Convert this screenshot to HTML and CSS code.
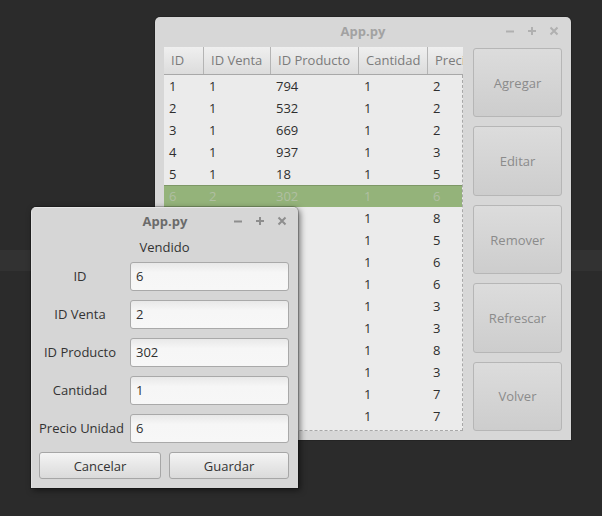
FILE: index.html
```html
<!DOCTYPE html>
<html lang="es">
<head>
<meta charset="utf-8">
<title>App.py</title>
<link rel="stylesheet" href="styles.css">
</head>
<body>
<div class="desktop">
  <div class="band"></div>

  <div class="window main-window">
    <div class="titlebar inactive">
      <span class="title">App.py</span>
      <div class="controls">
        <svg width="10" height="10" viewBox="0 0 10 10"><path d="M1 5.5h8" /></svg>
        <svg width="10" height="10" viewBox="0 0 10 10"><path d="M1 5h8M5 1v8" /></svg>
        <svg width="10" height="10" viewBox="0 0 10 10"><path d="M1.5 1.5l7 7M8.5 1.5l-7 7" /></svg>
      </div>
    </div>
    <div class="main-body">
      <div class="table">
        <div class="thead">
          <div class="th">ID</div>
          <div class="th">ID Venta</div>
          <div class="th">ID Producto</div>
          <div class="th">Cantidad</div>
          <div class="th">Precio Unidad</div>
        </div>
        <div class="tbody">
          <div class="tr"><span>1</span><span>1</span><span>794</span><span>1</span><span>2</span></div>
          <div class="tr"><span>2</span><span>1</span><span>532</span><span>1</span><span>2</span></div>
          <div class="tr"><span>3</span><span>1</span><span>669</span><span>1</span><span>2</span></div>
          <div class="tr"><span>4</span><span>1</span><span>937</span><span>1</span><span>3</span></div>
          <div class="tr"><span>5</span><span>1</span><span>18</span><span>1</span><span>5</span></div>
          <div class="tr selected"><span>6</span><span>2</span><span>302</span><span>1</span><span>6</span></div>
          <div class="tr"><span>7</span><span>2</span><span>415</span><span>1</span><span>8</span></div>
          <div class="tr"><span>8</span><span>2</span><span>87</span><span>1</span><span>5</span></div>
          <div class="tr"><span>9</span><span>3</span><span>221</span><span>1</span><span>6</span></div>
          <div class="tr"><span>10</span><span>3</span><span>640</span><span>1</span><span>6</span></div>
          <div class="tr"><span>11</span><span>3</span><span>58</span><span>1</span><span>3</span></div>
          <div class="tr"><span>12</span><span>4</span><span>733</span><span>1</span><span>3</span></div>
          <div class="tr"><span>13</span><span>4</span><span>196</span><span>1</span><span>8</span></div>
          <div class="tr"><span>14</span><span>4</span><span>512</span><span>1</span><span>3</span></div>
          <div class="tr"><span>15</span><span>5</span><span>880</span><span>1</span><span>7</span></div>
          <div class="tr"><span>16</span><span>5</span><span>27</span><span>1</span><span>7</span></div>
        </div>
      </div>
      <div class="side-buttons">
        <button class="big-btn">Agregar</button>
        <button class="big-btn">Editar</button>
        <button class="big-btn">Remover</button>
        <button class="big-btn">Refrescar</button>
        <button class="big-btn">Volver</button>
      </div>
    </div>
  </div>

  <div class="window dialog">
    <div class="titlebar active">
      <span class="title">App.py</span>
      <div class="controls">
        <svg width="10" height="10" viewBox="0 0 10 10"><path d="M1 5.5h8" /></svg>
        <svg width="10" height="10" viewBox="0 0 10 10"><path d="M1 5h8M5 1v8" /></svg>
        <svg width="10" height="10" viewBox="0 0 10 10"><path d="M1.5 1.5l7 7M8.5 1.5l-7 7" /></svg>
      </div>
    </div>
    <div class="dialog-body">
      <div class="heading">Vendido</div>
      <div class="form">
        <label class="lbl">ID</label><div class="input">6</div>
        <label class="lbl">ID Venta</label><div class="input">2</div>
        <label class="lbl">ID Producto</label><div class="input">302</div>
        <label class="lbl">Cantidad</label><div class="input">1</div>
        <label class="lbl">Precio Unidad</label><div class="input">6</div>
      </div>
      <div class="actions">
        <button class="btn">Cancelar</button>
        <button class="btn">Guardar</button>
      </div>
    </div>
  </div>
</div>
</body>
</html>
```

FILE: styles.css
```css
* { box-sizing: border-box; }
html, body { margin: 0; padding: 0; }
body {
  width: 602px;
  height: 516px;
  overflow: hidden;
  background: #2b2b2b;
  font-family: "Open Sans", "Noto Sans", "DejaVu Sans", sans-serif;
  font-size: 13px;
}
.desktop {
  position: relative;
  width: 602px;
  height: 516px;
  background: #2b2b2b;
}
.band {
  position: absolute;
  left: 0;
  top: 250px;
  width: 602px;
  height: 21px;
  background: #323232;
}

.window {
  position: absolute;
  background: #d6d6d6;
  border-radius: 5px 5px 0 0;
  display: flex;
  flex-direction: column;
}
.main-window {
  left: 155px;
  top: 17px;
  width: 416px;
  height: 423px;
  background: #d7d7d7;
  box-shadow: 0 0 0 1px rgba(0,0,0,0.15);
}
.dialog {
  left: 31px;
  top: 207px;
  width: 267px;
  height: 281px;
  background: #d6d6d6;
  border-top: 1px solid #e6e6e6;
  border-left: 1px solid #e2e2e2;
  box-shadow: 2px 2px 6px rgba(0,0,0,0.55), 0 0 0 1px rgba(0,0,0,0.2);
}

.titlebar {
  position: relative;
  height: 28px;
  flex: none;
  display: flex;
  align-items: center;
  justify-content: center;
}
.dialog .titlebar { height: 26px; }
.title {
  font-weight: 700;
  font-size: 13px;
  line-height: 16px;
}
.inactive .title { color: #a2a2a2; }
.active .title { color: #6b6b6b; }
.controls {
  position: absolute;
  right: 12px;
  top: 9px;
  display: flex;
  gap: 12px;
}
.dialog .controls { top: 8px; right: 11px; }
.controls svg path {
  fill: none;
  stroke-width: 2;
  stroke-linecap: butt;
}
.inactive .controls svg path { stroke: #b0b0b0; }
.active .controls svg path { stroke: #8e8e8e; }

.main-body {
  display: flex;
  gap: 10px;
  padding: 2px 9px 9px 9px;
  flex: 1;
}
.table {
  width: 299px;
  height: 384px;
  display: flex;
  flex-direction: column;
  overflow: hidden;
}
.thead {
  height: 28px;
  flex: none;
  display: grid;
  grid-template-columns: 40px 67px 88px 69px 90px;
  background: linear-gradient(#efefef, #dcdcdc);
  border-bottom: 1px solid #a8a8a8;
}
.th {
  padding-left: 7px;
  line-height: 27px;
  color: #7b7b7b;
  white-space: nowrap;
  overflow: hidden;
  border-right: 1px solid #b4b4b4;
}
.tbody {
  flex: 1;
  background: #ebebeb;
  border-right: 1px dashed #a8a8a8;
  border-bottom: 1px dashed #a8a8a8;
  overflow: hidden;
}
.tr {
  height: 22px;
  display: grid;
  grid-template-columns: 40px 67px 88px 69px 90px;
  line-height: 22px;
  color: #2e2e2e;
}
.tr span { padding-left: 5px; white-space: nowrap; }
.tr.selected {
  background: #94b37a;
  color: #b0bfa2;
  box-shadow: inset 0 1px 0 #7d9766;
}

.side-buttons {
  width: 89px;
  height: 384px;
  display: flex;
  flex-direction: column;
  gap: 9px;
  padding-top: 1px;
}
.big-btn {
  flex: 1;
  font-family: inherit;
  font-size: 13px;
  color: #8b8b8b;
  background: linear-gradient(#dcdcdc, #cdcdcd);
  border: 1px solid #b6b6b6;
  border-radius: 3px;
  padding: 0;
}

.dialog-body {
  flex: 1;
  padding: 2px 9px 8px 7px;
  display: flex;
  flex-direction: column;
}
.heading {
  height: 22px;
  line-height: 22px;
  text-align: center;
  color: #333;
  margin-left: 1px;
  margin-bottom: 4px;
}
.form {
  display: grid;
  grid-template-columns: 82px 159px;
  grid-auto-rows: 29px;
  column-gap: 9px;
  row-gap: 9px;
}
.lbl {
  color: #333;
  text-align: center;
  line-height: 29px;
  white-space: nowrap;
}
.input {
  border: 1px solid #a9a9a9;
  border-radius: 3px;
  background: linear-gradient(#e8e8e8, #f6f6f6 35%, #f7f7f7);
  color: #303030;
  padding-left: 5px;
  line-height: 27px;
}
.actions {
  margin-top: 9px;
  display: grid;
  grid-template-columns: 122px 120px;
  column-gap: 8px;
}
.btn {
  height: 27px;
  font-family: inherit;
  font-size: 13px;
  color: #333;
  background: linear-gradient(#f4f4f4, #dadada);
  border: 1px solid #a6a6a6;
  border-radius: 3px;
  padding: 0;
}
```
